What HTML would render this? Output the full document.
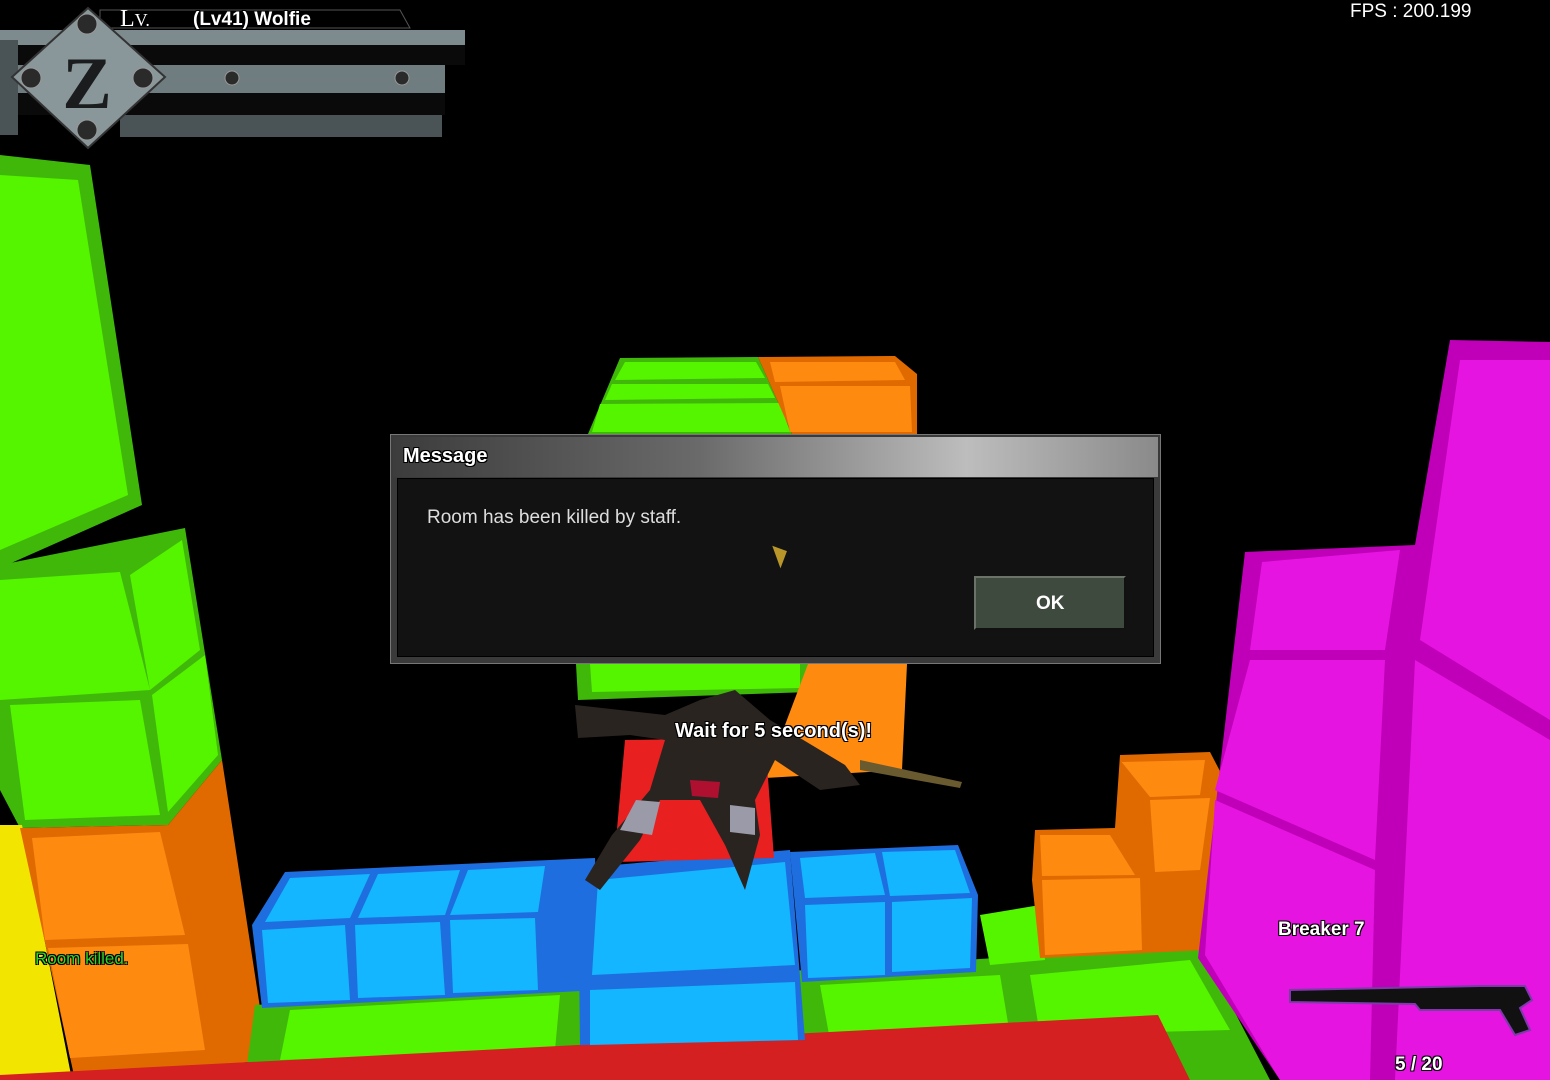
<!DOCTYPE html>
<html><head><meta charset="utf-8"><style>
body{margin:0;width:1550px;height:1080px;background:#000;overflow:hidden;position:relative;font-family:"Liberation Sans",sans-serif}
svg{position:absolute;left:0;top:0}
.t{position:absolute;white-space:nowrap}
.o{text-shadow:-1px -1px 0 #000,1px -1px 0 #000,-1px 1px 0 #000,1px 1px 0 #000}
</style></head><body>
<svg width="1550" height="1080" viewBox="0 0 1550 1080">
<polygon points="0,155 90,165 142,505 0,568" fill="#3fb80a"/>
<polygon points="0,175 78,180 128,495 0,550" fill="#55f500"/>
<polygon points="0,565 185,528 222,760 168,825 20,828 0,790" fill="#3fb80a"/>
<polygon points="0,580 120,572 150,690 0,700" fill="#55f500"/>
<polygon points="10,705 140,700 160,815 25,820" fill="#55f500"/>
<polygon points="130,575 182,540 200,650 150,690" fill="#55f500"/>
<polygon points="152,695 205,655 218,755 168,812" fill="#55f500"/>
<polygon points="0,825 22,825 72,1080 0,1080" fill="#f2e600"/>
<polygon points="20,828 168,825 222,760 268,1060 75,1080" fill="#e06a00"/>
<polygon points="32,838 160,832 185,935 45,940" fill="#ff8a10"/>
<polygon points="48,948 188,944 205,1050 70,1058" fill="#ff8a10"/>
<polygon points="255,1005 1200,945 1270,1080 245,1080" fill="#3fb80a"/>
<polygon points="290,1010 560,995 555,1050 280,1060" fill="#55f500"/>
<polygon points="820,985 1000,975 1010,1035 830,1040" fill="#55f500"/>
<polygon points="1030,975 1190,960 1230,1030 1040,1035" fill="#55f500"/>
<polygon points="980,915 1040,905 1045,960 990,965" fill="#55f500"/>
<polygon points="0,1080 0,1075 1158,1015 1190,1080" fill="#d42020"/>
<polygon points="252,925 285,872 595,858 600,990 262,1008" fill="#1e6ee0"/>
<polygon points="262,930 345,925 350,1000 268,1003" fill="#13b6ff"/>
<polygon points="355,925 440,922 445,995 358,998" fill="#13b6ff"/>
<polygon points="450,920 535,918 538,990 453,993" fill="#13b6ff"/>
<polygon points="290,878 370,874 350,918 265,922" fill="#13b6ff"/>
<polygon points="378,874 460,870 445,915 358,918" fill="#13b6ff"/>
<polygon points="468,870 545,866 538,912 450,915" fill="#13b6ff"/>
<polygon points="578,868 790,850 805,1040 580,1045" fill="#1e6ee0"/>
<polygon points="598,880 785,862 795,965 592,975" fill="#13b6ff"/>
<polygon points="590,990 795,982 798,1040 590,1045" fill="#13b6ff"/>
<polygon points="790,852 958,845 978,895 976,972 802,982" fill="#1e6ee0"/>
<polygon points="805,905 885,902 885,975 808,978" fill="#13b6ff"/>
<polygon points="892,902 972,898 970,968 892,972" fill="#13b6ff"/>
<polygon points="800,858 875,853 885,895 805,898" fill="#13b6ff"/>
<polygon points="882,852 955,850 970,893 890,896" fill="#13b6ff"/>
<polygon points="1035,830 1115,828 1120,755 1210,752 1222,775 1205,950 1040,958 1032,880" fill="#e06a00"/>
<polygon points="1122,762 1205,760 1200,795 1150,797 1120,760" fill="#ff8a10"/>
<polygon points="1150,800 1210,798 1200,870 1155,872" fill="#ff8a10"/>
<polygon points="1042,880 1140,878 1142,950 1045,955" fill="#ff8a10"/>
<polygon points="1040,835 1110,835 1135,875 1042,876" fill="#ff8a10"/>
<polygon points="1245,552 1415,545 1450,340 1550,342 1550,1080 1280,1080 1198,958" fill="#c000b8"/>
<polygon points="1262,562 1400,550 1385,650 1250,650" fill="#e614e0"/>
<polygon points="1250,660 1385,660 1375,860 1215,790" fill="#e614e0"/>
<polygon points="1215,800 1375,870 1370,1080 1280,1080 1205,955" fill="#e614e0"/>
<polygon points="1460,360 1550,360 1550,720 1420,640" fill="#e614e0"/>
<polygon points="1415,660 1550,740 1550,1080 1395,1080" fill="#e614e0"/>
<polygon points="620,358 758,357 792,434 588,434" fill="#3fb80a"/>
<polygon points="625,362 756,362 765,378 615,380" fill="#55f500"/>
<polygon points="612,384 768,384 775,398 605,400" fill="#55f500"/>
<polygon points="600,404 780,403 790,432 592,432" fill="#55f500"/>
<polygon points="758,357 895,356 917,374 917,434 792,434" fill="#e06a00"/>
<polygon points="770,362 895,362 905,380 775,382" fill="#ff8a10"/>
<polygon points="780,386 910,386 912,432 790,432" fill="#ff8a10"/>
<polygon points="576,664 810,664 810,692 578,700" fill="#3fb80a"/>
<polygon points="590,664 800,664 800,688 592,692" fill="#55f500"/>
<polygon points="808,664 907,664 902,770 765,778" fill="#ff8a10"/>
<polygon points="625,740 765,738 774,858 614,862" fill="#e82020"/>
<g fill="#2a2420">
<polygon points="575,705 665,715 700,700 735,690 770,720 845,765 860,785 820,790 775,760 755,800 760,835 745,890 725,845 700,800 660,800 640,840 600,890 585,880 612,835 650,790 665,740 630,735 578,738"/>
</g>
<polygon points="636,800 660,802 652,835 620,830" fill="#9a9aa8"/>
<polygon points="730,805 755,808 755,835 730,832" fill="#9a9aa8"/>
<polygon points="860,760 962,782 960,788 860,770" fill="#6a5a30"/>
<polygon points="690,780 720,782 718,798 692,796" fill="#b01030"/>
<g fill="#111" stroke="#7a3aa8" stroke-width="2">
<polygon points="1290,990 1480,986 1525,986 1532,1000 1520,1008 1530,1030 1515,1035 1500,1010 1420,1010 1415,1004 1290,1002"/>
</g>
<rect x="0" y="30" width="465" height="15" fill="#7d8a8e"/>
<rect x="0" y="45" width="465" height="20" fill="#0a0a0a"/>
<rect x="0" y="65" width="445" height="28" fill="#6f7c80"/>
<rect x="0" y="93" width="445" height="22" fill="#0a0a0a"/>
<rect x="120" y="115" width="322" height="22" fill="#4a5356"/>
<rect x="0" y="40" width="18" height="95" fill="#4a5356"/>
<polygon points="100,10 400,10 410,28 100,28" fill="#000" stroke="#555" stroke-width="1"/>
<polygon points="88,8 165,77 88,148 12,77" fill="#8a979a" stroke="#333" stroke-width="2"/>
<text x="87" y="108" font-family="Liberation Serif" font-weight="bold" font-size="74" text-anchor="middle" fill="#1a1c1d">Z</text>
<g fill="#2a2a2a" stroke="#999" stroke-width="1">
<circle cx="87" cy="24" r="10"/><circle cx="31" cy="78" r="10"/><circle cx="143" cy="78" r="10"/><circle cx="87" cy="130" r="10"/>
<circle cx="232" cy="78" r="7"/><circle cx="402" cy="78" r="7"/>
</g>
</svg>
<div class="t" style="left:120px;top:6px;color:#fff;font-family:'Liberation Serif',serif;font-size:24px">L<span style="font-size:18px">V.</span></div>
<div class="t o" style="left:193px;top:9px;color:#fff;font-weight:bold;font-size:19px">(Lv41) Wolfie</div>
<div class="t" style="left:1350px;top:1px;color:#fff;font-size:19px">FPS : 200.199</div>
<div style="position:absolute;left:390px;top:434px;width:771px;height:230px;background:#3a3a3a;border:1px solid #777;box-sizing:border-box">
<div style="position:absolute;left:2px;top:2px;right:2px;height:40px;background:linear-gradient(90deg,#3c3c3c 0%,#6a6a6a 40%,#bdbdbd 75%,#8a8a8a 100%)"></div>
<div class="t o" style="left:12px;top:10px;color:#fff;font-weight:bold;font-size:20px">Message</div>
<div style="position:absolute;left:6px;top:43px;right:6px;bottom:6px;background:#121212;border:1px solid #000"></div>
<div class="t" style="left:36px;top:72px;color:#ddd;font-size:19px">Room has been killed by staff.</div>
<div style="position:absolute;left:583px;top:141px;width:152px;height:54px;background:#3d4a3d;border:2px solid #6a726a;border-right-color:#111;border-bottom-color:#111;box-sizing:border-box"></div>
<div class="t" style="left:645px;top:158px;color:#fff;font-weight:bold;font-size:19px">OK</div>
<div style="position:absolute;left:385px;top:108px;width:0;height:0;border-left:12px solid #b8962a;border-top:10px solid transparent;border-bottom:14px solid transparent;transform:rotate(-20deg)"></div>
</div>
<div class="t o" style="left:675px;top:720px;color:#fff;font-weight:bold;font-size:20px">Wait for 5 second(s)!</div>
<div class="t o" style="left:35px;top:949px;color:#2fd02f;font-size:17px">Room killed.</div>
<div class="t o" style="left:1278px;top:919px;color:#fff;font-weight:bold;font-size:19px">Breaker 7</div>
<div class="t o" style="left:1395px;top:1054px;color:#fff;font-weight:bold;font-size:19px">5 / 20</div>
</body></html>
